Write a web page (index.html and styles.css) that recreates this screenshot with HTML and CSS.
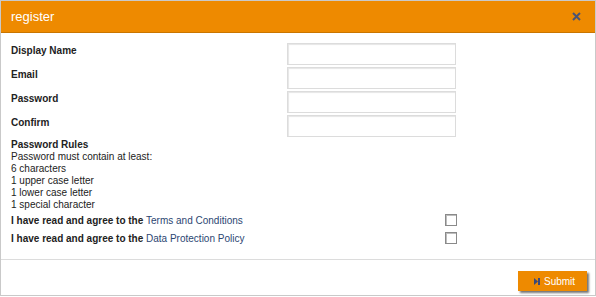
FILE: index.html
```html
<!DOCTYPE html>
<html lang="en">
<head>
  <meta charset="UTF-8" />
  <title>register</title>
  <link rel="stylesheet" href="styles.css">
</head>
<body>
  <div class="dialog">
    <!-- Cabecera -->
    <div class="dialog-head">
      <span class="dialog-title">register</span>
      <button class="btn-close" type="button" aria-label="close">
        <svg width="9" height="9" viewBox="0 0 9 9"><path d="M1 1L8 8M8 1L1 8" stroke="#4b5575" stroke-width="2" fill="none"/></svg>
      </button>
    </div>

    <!-- Formulario -->
    <form class="dialog-body">
      <div class="field">
        <label for="displayName">Display Name</label>
        <input type="text" id="displayName" />
      </div>
      <div class="field">
        <label for="email">Email</label>
        <input type="email" id="email" />
      </div>
      <div class="field">
        <label for="password">Password</label>
        <input type="password" id="password" />
      </div>
      <div class="field">
        <label for="confirm">Confirm</label>
        <input type="password" id="confirm" />
      </div>

      <div class="rules">
        <strong>Password Rules</strong>
        <div>Password must contain at least:</div>
        <div>6 characters</div>
        <div>1 upper case letter</div>
        <div>1 lower case letter</div>
        <div>1 special character</div>
      </div>

      <div class="agree">
        <label for="terms">I have read and agree to the <a href="#">Terms and Conditions</a></label>
        <input type="checkbox" id="terms" />
      </div>
      <div class="agree">
        <label for="privacy">I have read and agree to the <a href="#">Data Protection Policy</a></label>
        <input type="checkbox" id="privacy" />
      </div>
    </form>

    <!-- Pie -->
    <div class="dialog-foot">
      <button class="btn-submit" type="button">
        <svg width="6" height="7" viewBox="0 0 6 7"><path d="M0 0L4 3.5L0 7Z" fill="#3d4a78"/><rect x="4" y="0" width="2" height="7" fill="#3d4a78"/></svg>
        Submit
      </button>
    </div>
  </div>
</body>
</html>
```

FILE: styles.css
```css
body { margin: 0; font-family: "Liberation Sans", Arial, sans-serif; font-size: 10px; color: #222; background: #fff; }
.dialog { box-sizing: border-box; height: 296px; border: 1px solid #c9c9c9; display: flex; flex-direction: column; }
.dialog-head { height: 31px; background: #ee8a00; border-bottom: 1px solid #c97500; display: flex; align-items: center; justify-content: space-between; padding: 0 11px 0 10px; }
.dialog-title { color: #fff; font-size: 13px; }
.btn-close { border: 0; background: none; padding: 0; width: 9px; height: 9px; display: flex; margin-right: 3px; }
.dialog-body { flex: 1; padding: 10px 0 0 10px; margin: 0; }
.field { display: grid; grid-template-columns: 276px 169px; height: 24px; }
.field label { font-weight: bold; padding-top: 2px; line-height: 12px; }
.field input { box-sizing: border-box; height: 22px; margin: 0; border: 1px solid #dcdcdc; box-shadow: inset 1px 1px 1px #e6e6e6; padding: 2px 4px; }
.rules { line-height: 12px; }
.agree { display: grid; grid-template-columns: 434px 12px; height: 18px; align-items: center; }
.agree label { font-weight: bold; }
.agree a { color: #2b4672; font-weight: normal; text-decoration: none; }
.agree input { appearance: none; margin: 0; width: 12px; height: 12px; border: 1px solid #8a8a8a; box-shadow: inset 1px 1px 0 #bdbdbd; background: #fff; }
.dialog-foot { height: 36px; border-top: 1px solid #dcdcdc; display: flex; justify-content: flex-end; align-items: flex-start; padding: 11px 8px 0 0; box-sizing: border-box; }
.btn-submit { width: 69px; height: 20px; background: #ee8a00; color: #fff; border: 0; font-family: inherit; font-size: 10px; display: flex; align-items: center; justify-content: flex-start; gap: 4px; box-shadow: 2px 2px 2px rgba(0, 0, 0, 0.55); padding: 0 0 0 16px; }
```
